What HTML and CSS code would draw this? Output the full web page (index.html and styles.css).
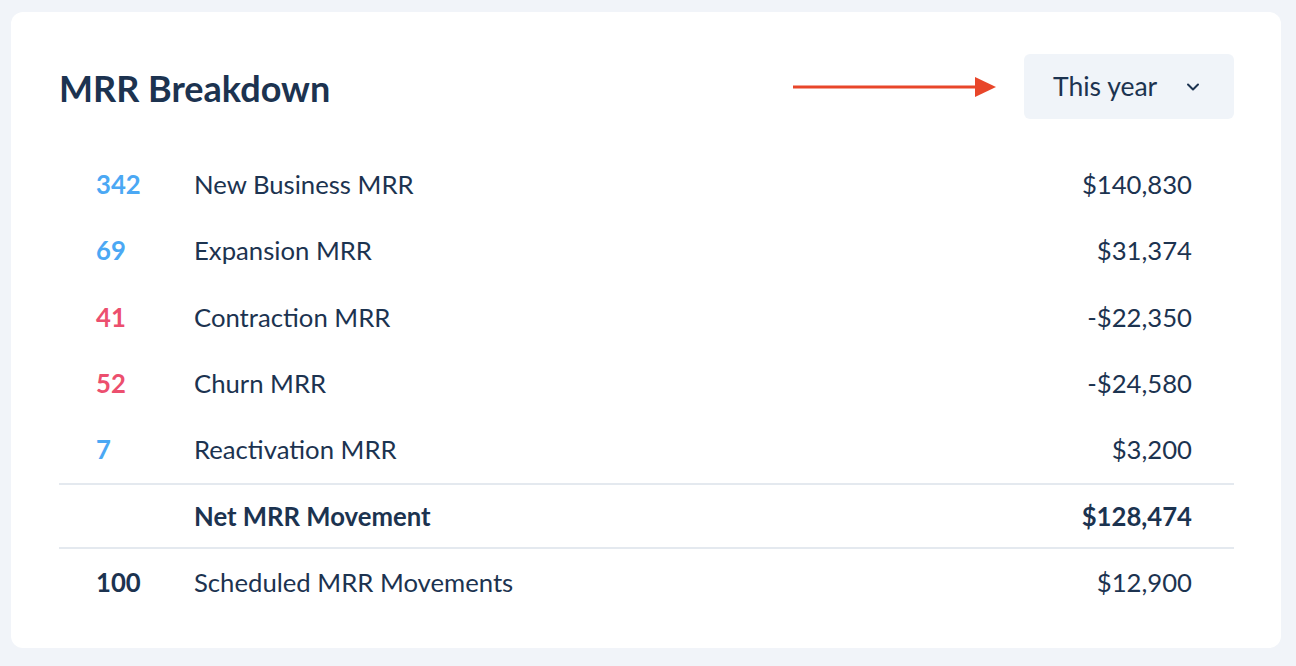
FILE: index.html
```html
<!DOCTYPE html>
<html>
<head>
<meta charset="utf-8">
<link rel="stylesheet" href="styles.css">
</head>
<body>
<div class="card">
  <div class="header">
    <h1 class="title">MRR Breakdown</h1>
    <div class="controls">
      <svg class="arrow" width="204" height="22" viewBox="0 0 204 22">
        <rect x="0" y="9.5" width="186" height="3" fill="#e8462a"/>
        <polygon points="182,1 203,11 182,21" fill="#e8462a"/>
      </svg>
      <div class="dropdown">
        <span>This year</span>
        <svg width="14" height="10" viewBox="0 0 14 10"><path d="M2 2.5 L7 7.5 L12 2.5" fill="none" stroke="#1c3350" stroke-width="2" stroke-linecap="round" stroke-linejoin="round"/></svg>
      </div>
    </div>
  </div>
  <div class="list">
    <div class="row"><span class="count blue">342</span><span class="label">New Business MRR</span><span class="amount">$140,830</span></div>
    <div class="row"><span class="count blue">69</span><span class="label">Expansion MRR</span><span class="amount">$31,374</span></div>
    <div class="row"><span class="count red">41</span><span class="label">Contraction MRR</span><span class="amount">-$22,350</span></div>
    <div class="row"><span class="count red">52</span><span class="label">Churn MRR</span><span class="amount">-$24,580</span></div>
    <div class="row"><span class="count blue">7</span><span class="label">Reactivation MRR</span><span class="amount">$3,200</span></div>
    <div class="row total"><span class="count"></span><span class="label">Net MRR Movement</span><span class="amount">$128,474</span></div>
    <div class="row"><span class="count dark">100</span><span class="label">Scheduled MRR Movements</span><span class="amount">$12,900</span></div>
  </div>
</div>
</body>
</html>
```

FILE: styles.css
```css
html, body {
  margin: 0;
  padding: 0;
  background: #f1f4f9;
}
body {
  font-family: Lato, "Open Sans", sans-serif;
  color: #1c3350;
  padding: 12px 15px 18px 11px;
}
.card {
  background: #ffffff;
  border-radius: 12px;
  height: 636px;
  box-sizing: border-box;
  padding: 42px 47px 0 48px;
}
.header {
  display: flex;
  align-items: center;
  justify-content: space-between;
  height: 65px;
}
.title {
  margin: 0;
  font-size: 36px;
  font-weight: 700;
  color: #1c3350;
  padding-top: 2px;
}
.controls {
  display: flex;
  align-items: center;
}
.arrow {
  display: block;
  margin-right: 27px;
  margin-top: 1px;
}
.dropdown {
  width: 210px;
  height: 65px;
  box-sizing: border-box;
  background: #f0f4f9;
  border-radius: 6px;
  display: flex;
  align-items: center;
  justify-content: space-between;
  padding: 0 34px 0 29px;
  font-size: 26.5px;
}
.dropdown span { margin-top: -1px; }
.dropdown svg { display: block; }
.list {
  margin-top: 32px;
}
.row {
  display: grid;
  grid-template-columns: 98px 1fr auto;
  align-items: center;
  height: 66.33px;
  box-sizing: border-box;
  padding: 0 42px 0 37px;
  font-size: 25.7px;
}
.row.total {
  border-top: 2px solid #e4e9ef;
  border-bottom: 2px solid #e4e9ef;
  font-weight: 700;
}
.count { font-weight: 700; }
.blue { color: #4ba8f4; }
.red { color: #ec4f6e; }
.dark { color: #1c3350; }
.amount { text-align: right; }
```
